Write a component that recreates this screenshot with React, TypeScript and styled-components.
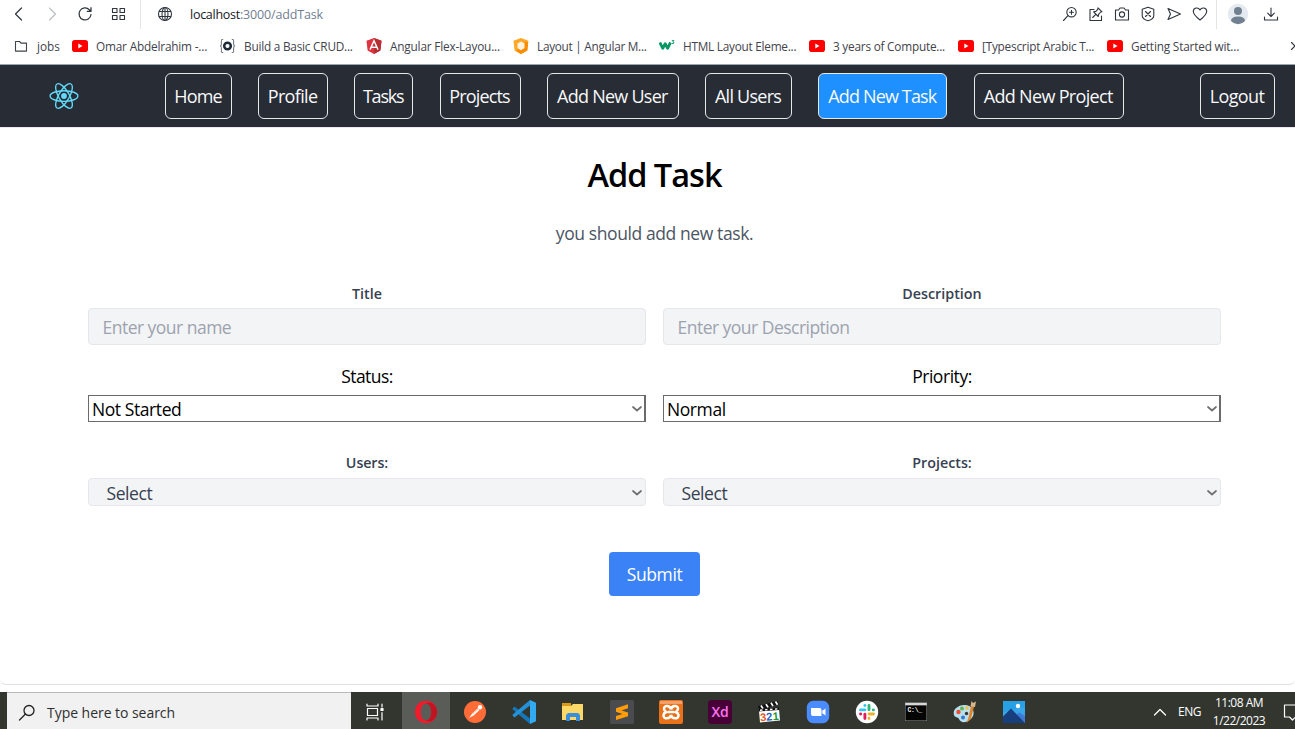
import React from 'react';
import styled, { createGlobalStyle } from 'styled-components';

const GlobalStyle = createGlobalStyle`
  * { box-sizing: border-box; }
  html, body { margin: 0; height: 729px; overflow: hidden; }
  body { background: #fff; font-family: "Open Sans", "Noto Sans", sans-serif; }
  svg { display: block; flex: none; }
`;

const Screen = styled.div`
  width: 1295px;
  height: 729px;
  display: flex;
  flex-direction: column;
  overflow: hidden;
  background: #fff;
`;

const Toolbar = styled.div`
  height: 29px;
  flex: none;
  display: flex;
  align-items: center;
  padding: 0 16px 0 11px;
`;

const ToolGroup = styled.div<{ $gap: number; $left?: number }>`
  display: flex;
  align-items: center;
  gap: ${(p) => p.$gap}px;
  margin-left: ${(p) => p.$left ?? 0}px;
  padding-bottom: 1px;
`;

const Divider = styled.div<{ $left: number }>`
  width: 1px;
  height: 29px;
  margin-left: ${(p) => p.$left}px;
  background: #e3e4e8;
`;

const Address = styled.div`
  flex: 1;
  margin-left: 17px;
  font-size: 12.5px;
  line-height: 18px;
  letter-spacing: -0.27px;
  color: #16181d;
  span { color: #708090; letter-spacing: -0.15px; }
`;

const Bookmarks = styled.div`
  height: 36px;
  flex: none;
  display: flex;
  align-items: center;
  padding: 0 0 1px 13px;
  border-bottom: 1px solid #9aa7b3;
`;

const Bookmark = styled.div<{ $width: number; $ls: number }>`
  width: ${(p) => p.$width}px;
  flex: none;
  display: flex;
  align-items: center;
  gap: 8px;
  font-size: 11.8px;
  line-height: 18px;
  letter-spacing: ${(p) => p.$ls}px;
  white-space: nowrap;
  color: #3f434b;
`;

const Nav = styled.nav`
  height: 62px;
  flex: none;
  display: flex;
  align-items: center;
  padding: 0 20px 0 49px;
  background: #282c34;
`;

const NavLinks = styled.div`
  flex: 1;
  display: flex;
  gap: 26.4px;
  margin-left: 86px;
`;

const NavButton = styled.button<{ $width: number; $ls: number; $active?: boolean }>`
  width: ${(p) => p.$width}px;
  height: 46px;
  flex: none;
  display: flex;
  align-items: center;
  justify-content: center;
  padding: 0 1px 1px 0;
  border: 1px solid #e6e8ea;
  border-radius: 6px;
  background: ${(p) => (p.$active ? '#1e90ff' : 'transparent')};
  color: #f8f9fa;
  font: 480 18px/26px "Open Sans", sans-serif;
  letter-spacing: ${(p) => p.$ls}px;
  white-space: nowrap;
`;

const Page = styled.main`
  height: 558px;
  flex: none;
  display: flex;
  flex-direction: column;
  align-items: center;
  padding-left: 14px;
  border-top: 1px solid #eceaf0;
  border-bottom: 1px solid #dfe0e8;
  border-radius: 0 0 6px 6px;
`;

const Heading = styled.h1`
  margin: 24px 0 0;
  font-size: 32.5px;
  font-weight: 570;
  line-height: 46px;
  letter-spacing: -1px;
  color: #000;
`;

const Lead = styled.p`
  margin: 22px 0 0;
  font-size: 17.5px;
  line-height: 26px;
  letter-spacing: -0.4px;
  color: #4b5563;
`;

const Form = styled.form`
  width: 1133px;
  margin-top: 36px;
  display: grid;
  grid-template-columns: 558px 558px;
  column-gap: 17px;
`;

const Field = styled.div<{ $height: number }>`
  height: ${(p) => p.$height}px;
  display: flex;
  flex-direction: column;
`;

const Label = styled.label<{ $plain?: boolean; $ls?: number; $line?: number }>`
  height: ${(p) => (p.$plain ? 35 : 26)}px;
  line-height: ${(p) => p.$line ?? (p.$plain ? 32 : 24)}px;
  text-align: center;
  font-size: ${(p) => (p.$plain ? 17.5 : 14.3)}px;
  font-weight: ${(p) => (p.$plain ? 400 : 570)};
  letter-spacing: ${(p) => p.$ls ?? 0}px;
  color: ${(p) => (p.$plain ? '#000' : '#374151')};
`;

const Input = styled.input`
  height: 37px;
  padding: 0 13.5px 0;
  border: 1px solid #e5e7eb;
  border-radius: 4px;
  background: #f3f4f6;
  font: 400 17.5px/24px "Open Sans", sans-serif;
  letter-spacing: -0.52px;
  &::placeholder { color: #9ca3af; opacity: 1; }
`;

const Select = styled.div<{ $soft?: boolean }>`
  height: ${(p) => (p.$soft ? 28 : 27)}px;
  display: flex;
  align-items: center;
  justify-content: space-between;
  padding: ${(p) => (p.$soft ? '2px 3px 0 17.5px' : '1px 2px 0 3px')};
  border: 1px solid ${(p) => (p.$soft ? '#e5e7eb' : '#6b6b6b')};
  border-right-width: ${(p) => (p.$soft ? 1 : 2)}px;
  border-radius: ${(p) => (p.$soft ? 4 : 0)}px;
  background: ${(p) => (p.$soft ? '#f3f4f6' : '#fff')};
  color: ${(p) => (p.$soft ? '#374151' : '#000')};
  font-size: 17.5px;
  line-height: 24px;
  letter-spacing: -0.42px;
  svg { margin-top: ${(p) => (p.$soft ? -1 : 0)}px; }
`;

const Submit = styled.button`
  width: 91px;
  height: 44px;
  margin-top: 46px;
  padding: 0 0 1px;
  border: 0;
  border-radius: 4px;
  background: #3b82f6;
  color: #fff;
  font: 400 17.5px/26px "Open Sans", sans-serif;
  letter-spacing: -0.4px;
`;

const Taskbar = styled.footer`
  height: 37px;
  margin-top: 7px;
  flex: none;
  display: flex;
  padding-left: 7px;
  background: #33362f;
  color: #fff;
`;

const Search = styled.div`
  width: 344px;
  flex: none;
  display: flex;
  align-items: center;
  gap: 11px;
  padding: 3px 0 0 11px;
  border-top: 1px solid #b9b9b9;
  background: #f1f1f1;
  color: #2f2f2f;
  font-size: 14px;
  letter-spacing: -0.04px;
`;

const Apps = styled.div`
  flex: 1;
  display: flex;
`;

const AppSlot = styled.div<{ $active?: boolean; $first?: boolean }>`
  width: ${(p) => (p.$first ? 51 : p.$active ? 48 : 49)}px;
  margin-right: ${(p) => (p.$active ? 0.5 : 0)}px;
  height: 37px;
  padding: 3px ${(p) => (p.$first ? 3 : 0)}px 0 0;
  display: flex;
  align-items: center;
  justify-content: center;
  background: ${(p) => (p.$active ? '#595c57' : 'transparent')};
`;

const Tray = styled.div`
  width: 142px;
  flex: none;
  display: flex;
  align-items: center;
  overflow: hidden;
  font-size: 12px;
  svg { margin-top: 3px; }
`;

const Lang = styled.span`
  width: 24px;
  flex: none;
  margin: 2px 0 0 11px;
  letter-spacing: -0.5px;
`;

const Clock = styled.div`
  width: 62px;
  flex: none;
  margin-left: 6px;
  text-align: center;
  line-height: 17.500px;
  padding-top: 2px;
  letter-spacing: -0.5px;
  white-space: nowrap;
`;

type LineProps = { w: number; h?: number; vb: string; color?: string; sw?: number; children: React.ReactNode };
const Line = ({ w, h = w, vb, color = '#2f353e', sw = 1.1, children }: LineProps) => (
  <svg width={w} height={h} viewBox={vb} fill="none" stroke={color} strokeWidth={sw} strokeLinejoin="round" strokeLinecap="round">
    {children}
  </svg>
);

const Chevron = () => (
  <Line w={10} h={8} vb="0 0 10 8" color="#707070" sw={1.7}><path d="M1 2 5 5.500 9 2" /></Line>
);

const YouTube = () => (
  <svg width="16" height="12" viewBox="0 0 16 12"><rect width="16" height="12" rx="2.8" fill="#f00" /><path d="M6.3 3.6 10.5 6l-4.2 2.4z" fill="#fff" /></svg>
);
const Folder = () => (
  <Line w={16} vb="0 0 16 16" color="#3f434b"><path d="M2.5 3.500h4l1.5 1.600h5.500v8h-11z" /></Line>
);
const Braces = () => (
  <svg width="17" height="16" viewBox="0 0 17 16" fill="none" stroke="#777c82" strokeWidth="1.1">
    <path d="M4.2 1.5H3Q2.4 1.5 2.4 3v3Q2.4 8 1 8q1.4 0 1.4 2v3q0 1.5.6 1.5h1.2M12.8 1.5H14q.6 0 .6 1.5v3q0 2 1.4 2-1.4 0-1.4 2v3q0 1.5-.6 1.5h-1.2" />
    <circle cx="8.5" cy="8" r="3.3" stroke="#1d2a37" strokeWidth="2.5" />
  </svg>
);
const Angular = () => (
  <svg width="16" height="16" viewBox="0 0 16 16">
    <path d="M8 0 15.5 2.7 14.4 12.4 8 16 1.6 12.4.5 2.7z" fill="#dd3340" />
    <path d="M8 0 15.5 2.7 14.4 12.4 8 16z" fill="#b52e31" />
    <path d="M4 11.6 8 2.8l4 8.800M5.700 9.200h4.600" fill="none" stroke="#fff" strokeWidth="1.4" />
  </svg>
);
const Material = () => (
  <svg width="16" height="16" viewBox="0 0 16 16">
    <path d="M8 0 15.4 2.7 14.3 12.4 8 16 1.6 12.4.5 2.7z" fill="#ffa726" />
    <path d="m8 16-5-2.800 9-9.500 3.200.8-.9 7.900z" fill="#fb8c00" />
    <path d="m8 3.400 4 2.300-1 1.200 1 .9-1 1.100 1 .9L8 12.200 4 9.800l1-.9-1-1.100 1-.9-1-1.200z" fill="#fff3df" />
  </svg>
);
const W3 = () => (
  <svg width="16" height="16" viewBox="0 0 16 16" fill="none" stroke="#059862">
    <path d="m.8 4.500 3 5.800 2.400-4.600 2.400 4.600 2.900-5.800" strokeWidth="2.800" strokeLinejoin="round" />
    <path d="M12.800 2.600h2.200l-1.200 1.300q1.500 0 1.200 1.200-.7 1-2.100.3" strokeWidth=".9" />
  </svg>
);

const ReactLogo = () => (
  <svg width="30" height="30" viewBox="-15 -15 30 30" fill="none" stroke="#61dafb" strokeWidth="1.35">
    <circle r="2.9" fill="#61dafb" stroke="none" />
    {[0, 60, 120].map((a) => <ellipse key={a} rx="13.9" ry="5.3" transform={`rotate(${a})`} />)}
  </svg>
);

const bookmarks = [
  { icon: <Folder />, label: 'jobs', width: 59, ls: -0.05 },
  { icon: <YouTube />, label: 'Omar Abdelrahim -...', width: 147, ls: -0.18 },
  { icon: <Braces />, label: 'Build a Basic CRUD...', width: 147, ls: -0.22 },
  { icon: <Angular />, label: 'Angular Flex-Layou...', width: 147, ls: -0.18 },
  { icon: <Material />, label: 'Layout | Angular M...', width: 146, ls: -0.28 },
  { icon: <W3 />, label: 'HTML Layout Eleme...', width: 150, ls: -0.25 },
  { icon: <YouTube />, label: '3 years of Compute...', width: 149, ls: -0.22 },
  { icon: <YouTube />, label: '[Typescript Arabic T...', width: 149, ls: -0.22 },
  { icon: <YouTube />, label: 'Getting Started wit...', width: 182, ls: -0.18 },
];

const links = [
  { label: 'Home', width: 67, ls: -0.9 },
  { label: 'Profile', width: 69.4, ls: -0.65 },
  { label: 'Tasks', width: 59, ls: -1.2 },
  { label: 'Projects', width: 81, ls: -0.85 },
  { label: 'Add New User', width: 131.8, ls: -0.75 },
  { label: 'All Users', width: 86.8, ls: -0.75 },
  { label: 'Add New Task', width: 129, ls: -0.83, active: true },
  { label: 'Add New Project', width: 150, ls: -0.67 },
];

const appIcons = [
  <Line w={18} vb="0 0 18 18" color="#fff" sw={1.2} key="tasks"><path d="M1 1v2h11V1M1 17v-2h11v2M1.5 5.5h10v7h-10zM16 1v3M16 9.500v7.500" /><path d="M15 5.500h2v2h-2z" fill="#fff" /></Line>,
  <svg key="opera" width="24" height="24" viewBox="0 0 24 24">
    <path fillRule="evenodd" d="M12 .8C5.500.8 1 5.600 1 12s4.500 11.200 11 11.200S23 18.400 23 12 18.500.8 12 .8m0 2.700c3.500 0 5.200 3.800 5.200 8.500s-1.700 8.500-5.200 8.500-5.200-3.800-5.200-8.500 1.700-8.500 5.200-8.500" fill="#f21b2d" />
    <path d="M12 3.500c2-1.700 5-1 7 .3C24.500 8 24.500 16 19 20.200c-2 1.400-5 2-7 .3 3.500 0 5.200-3.800 5.200-8.500S15.500 3.500 12 3.500" fill="#c01422" />
  </svg>,
  <svg key="postman" width="24" height="24" viewBox="0 0 24 24">
    <circle cx="12" cy="12" r="11" fill="#ff6c37" />
    <path d="m6 18 3.200-4.400 5.300-5.100 2 1.600-5.600 5.200z" fill="#fff" /><circle cx="17" cy="7.300" r="2.200" fill="#fff" /><path d="m9.500 14 5-4.500" stroke="#ff9a74" strokeWidth=".6" />
  </svg>,
  <svg key="vscode" width="24" height="24" viewBox="0 0 24 24">
    <path d="M.7 8.300 2.500 6.600l15.500 12V24L.7 9.500z" fill="#1677b8" />
    <path d="M.7 15.700 2.500 17.400 18 5.400V0L.7 14.500z" fill="#2491d6" />
    <path d="m18 0 6 2.800v18.400L18 24z" fill="#33a9f2" />
  </svg>,
  <svg key="files" width="24" height="24" viewBox="0 0 24 24">
    <path d="M1 3h9v4H1z" fill="#d99a18" /><path d="M1 6h9l2-2h10v16H1z" fill="#fbd867" />
    <path d="M5 21v-6l2-2h10l2 2v6h-4v-4H9v4z" fill="#3a8fdd" />
  </svg>,
  <svg key="sublime" width="24" height="24" viewBox="0 0 24 24">
    <rect width="24" height="24" rx="1.500" fill="#4a4b4e" />
    <path d="m6 8.300 12-4v4L11.500 10.400 18 12.500v3.700L6 20v-4l6.500-2.100L6 11.700z" fill="#ff9c0a" />
  </svg>,
  <svg key="xampp" width="24" height="24" viewBox="0 0 24 24">
    <rect width="24" height="24" rx="2" fill="#e8711a" /><path d="M1 1h22v3H1z" fill="#f0a068" />
    <path d="M12 9.500C11 5 5 5 5 8.700q0 2 2.400 3.300Q4.500 13 4.500 15.600c0 3.600 6.500 3.800 7.500-.6 1 4.400 7.500 4.200 7.500.6Q19.500 13 16.600 12 19 10.700 19 8.700C19 5 13 5 12 9.500M9 12h6" fill="none" stroke="#fff" strokeWidth="2.500" />
  </svg>,
  <svg key="xd" width="24" height="24" viewBox="0 0 24 24">
    <rect width="24" height="24" rx="4" fill="#470137" />
    <text x="12" y="16.800" textAnchor="middle" fontFamily="Open Sans" fontWeight="600" fontSize="14" letterSpacing="-.1" fill="#ff72f2">Xd</text>
  </svg>,
  <svg key="mpc" width="24" height="24" viewBox="0 0 24 24">
    <path d="m2 11 20-2 1 11.500-20 2z" fill="#fff" /><path d="M1 6 20.500.8l1 3.700L2 9.500z" fill="#111" />
    <path d="m4 5.500 2 3.200M9 4.100l2 3.200M14 2.800 16 6M18.500 1.500l2 3.200" stroke="#fff" strokeWidth="1.700" />
    <path d="m2 10.200 20-1.400" stroke="#111" strokeWidth="2.500" /><path d="m3 10.200 19-1.400" stroke="#fff" strokeWidth="1.400" strokeDasharray="2.500 2.500" />
    <g transform="rotate(-5 12 19)" fontFamily="Liberation Sans" fontWeight="700" fontSize="11">
      <text x="3.400" y="20.500" fill="#e2571b">3</text><text x="9.400" y="20.500" fill="#2464c6">2</text><text x="15.800" y="20.500" fill="#219536">1</text>
    </g>
  </svg>,
  <svg key="zoom" width="24" height="24" viewBox="0 0 24 24">
    <rect x=".8" y=".8" width="22.400" height="22.400" rx="6.500" fill="#4a8cff" />
    <path d="M5 8h8.500a2 2 0 0 1 2 2v6H7a2 2 0 0 1-2-2zM16.300 10.800 19.500 8.500v7l-3.200-2.300z" fill="#fff" />
  </svg>,
  <svg key="slack" width="24" height="24" viewBox="0 0 24 24" fill="none" strokeWidth="2.900" strokeLinecap="round">
    <circle cx="12" cy="12" r="11.200" fill="#fff" />
    <path d="M9.900 9.900H5.500M9.900 5.400v.2" stroke="#36c5f0" />
    <path d="M14 5.500v4.300M18.500 9.900h-.2" stroke="#2eb67d" /><path d="M14 14h4.500M14 18.500v-.2" stroke="#ecb22e" />
    <path d="M9.900 14.100v4.400M5.500 14h.2" stroke="#e01e5a" />
  </svg>,
  <svg key="cmd" width="24" height="24" viewBox="0 0 24 24">
    <path d="M1 2.500h22V21H1z" fill="#999" /><path d="M1.500 5.500h21v15h-21z" fill="#050505" /><path d="M1.500 3h21v2h-21z" fill="#d7d7d7" />
    <text x="3.500" y="12" fontFamily="Liberation Mono" fontWeight="700" fontSize="6.500" letterSpacing="-.3" fill="#eee">C:\_</text>
  </svg>,
  <svg key="paint" width="24" height="24" viewBox="0 0 24 24">
    <path d="M11 5C4 5.500-.5 10 1 15c1 3 4 1.500 5 4 1 3 4.500 4 8 2.500 5-2 8-7 6-11.500C18.500 6.500 15 4.800 11 5" fill="#b8def0" />
    <circle cx="5.500" cy="12" r="2.200" fill="#e84e32" /><circle cx="9" cy="8.500" r="2" fill="#61b84e" /><circle cx="14" cy="8" r="1.800" fill="#f4c43b" /><circle cx="10" cy="17.500" r="2" fill="#3478c6" /><circle cx="13.500" cy="13.500" r="1.700" fill="#33362f" />
    <path d="m13.500 23 2-5.500L18 6l3 .8-3 11.700z" fill="#df862b" /><path d="M17.500 6.500 18.500 1l1.500 2L23 1.500 22 7z" fill="#d9b58a" />
  </svg>,
  <svg key="photos" width="24" height="24" viewBox="0 0 24 24">
    <path d="M1 1h22v22H1z" fill="#3aa6ea" /><path d="M1 1h22v6L1 12z" fill="#27a0e6" /><path d="M23 16v7h-9l-1-7 4-3.500z" fill="#3e79d4" /><path d="m1 16.500 8-8L23 23H1z" fill="#173f7d" /><circle cx="16" cy="6" r="2.200" fill="#fff" />
  </svg>,
];

export default function App() {
  return (
    <Screen>
      <GlobalStyle />
      <Toolbar>
        <ToolGroup $gap={17}>
          <Line w={16} vb="0 0 16 16" sw={1.2}><path d="M10.500 2 4.500 8l6 6" /></Line>
          <Line w={16} vb="0 0 16 16" color="#b9bdc2"><path d="m5.500 2 6 6-6 6" /></Line>
          <Line w={16} vb="0 0 16 16" sw={1.25}><path d="M14 8.500A6 6 0 1 1 12.300 3.700L14 5.300M14 1.700v3.700h-3.700" /></Line>
          <Line w={16} vb="0 0 16 16"><path d="M2.500 2.500H7v4H2.500zM10 2.500h4.500v4H10zM2.500 9.500H7v4H2.500zM10 9.500h4.500v4H10z" /></Line>
        </ToolGroup>
        <Divider $left={14} />
        <ToolGroup $gap={0} $left={16}>
          <Line w={16} vb="0 0 16 16"><circle cx="8" cy="8" r="6.500" /><ellipse cx="8" cy="8" rx="3" ry="6.500" /><path d="M8 1.500v13M2.300 5.500h11.400M2.300 10.500h11.400" /></Line>
        </ToolGroup>
        <Address>localhost<span>:3000/addTask</span></Address>
        <ToolGroup $gap={10}>
          <Line w={16} vb="0 0 16 16"><circle cx="9.500" cy="6.200" r="4.700" /><path d="M9.500 4.200v4M7.500 6.200h4M6 9.700 1.500 14.500" /></Line>
          <Line w={16} vb="0 0 16 16"><path d="M6 3.500H2v11h11.500V10M10 1.800l4 4-1.300.2-2 2.200-.4 2.300L5.600 5.800l2.300-.4 2-2.200zM8 8.200l-3.300 3.300" /></Line>
          <Line w={16} vb="0 0 16 16"><path d="M1.500 4h3l1.500-2h4l1.500 2h3v10h-13z" /><circle cx="8" cy="8.500" r="2.600" /></Line>
          <Line w={16} vb="0 0 16 16"><path d="m8 1.200 5.800 2v6.300c0 2.700-3 4.500-5.800 5.300-2.800-.8-5.800-2.600-5.800-5.300V3.200zM5.500 5.500l5 5M10.500 5.500l-5 5" /></Line>
          <Line w={16} vb="0 0 16 16"><path d="M2 2.500 14.500 8 2 13.500 4.500 8z" /></Line>
          <Line w={16} vb="0 0 16 16"><path d="M8 14C3 10 1.300 8 1.300 5.500c0-4 5-4.700 6.700-1.500C9.700.8 14.700 1.500 14.700 5.500 14.700 8 13 10 8 14" /></Line>
        </ToolGroup>
        <Divider $left={8} />
        <ToolGroup $gap={14} $left={10}>
          <svg width="22" height="22" viewBox="0 0 22 22"><circle cx="11" cy="11" r="10.200" fill="#e5eaf0" /><circle cx="11" cy="8" r="4" fill="#708090" /><path d="M4 18q0-4.500 7-4.500t7 4.500q-3 3.200-7 3.200T4 18" fill="#708090" /></svg>
          <Line w={16} vb="0 0 16 16"><path d="M8 2v8.500M4.700 7.200 8 10.500l3.300-3.300M1.500 11v3h13v-3" /></Line>
        </ToolGroup>
      </Toolbar>
      <Bookmarks>
        {bookmarks.map((b) => <Bookmark key={b.label} $width={b.width} $ls={b.ls}>{b.icon}{b.label}</Bookmark>)}
        <Line w={8} h={10} vb="0 0 8 10"><path d="m2.500 1.500 3.500 3.500-3.500 3.500" /></Line>
      </Bookmarks>
      <Nav>
        <ReactLogo />
        <NavLinks>
          {links.map((l) => <NavButton key={l.label} $width={l.width} $ls={l.ls} $active={l.active}>{l.label}</NavButton>)}
        </NavLinks>
        <NavButton $width={75} $ls={-0.65}>Logout</NavButton>
      </Nav>
      <Page>
        <Heading>Add Task</Heading>
        <Lead>you should add new task.</Lead>
        <Form>
          <Field $height={78}><Label>Title</Label><Input placeholder="Enter your name" /></Field>
          <Field $height={78}><Label>Description</Label><Input placeholder="Enter your Description" /></Field>
          <Field $height={92}><Label $plain $ls={-0.6}>Status:</Label><Select>Not Started<Chevron /></Select></Field>
          <Field $height={92}><Label $plain $ls={-0.45}>Priority:</Label><Select>Normal<Chevron /></Select></Field>
          <Field $height={54}><Label $ls={-0.1} $line={22}>Users:</Label><Select $soft>Select<Chevron /></Select></Field>
          <Field $height={54}><Label $line={22}>Projects:</Label><Select $soft>Select<Chevron /></Select></Field>
        </Form>
        <Submit>Submit</Submit>
      </Page>
      <Taskbar>
        <Search>
          <Line w={18} vb="0 0 18 18" color="#222" sw={1.3}><circle cx="11" cy="6.500" r="5" /><path d="M7.500 10 1.500 16" /></Line>
          Type here to search
        </Search>
        <Apps>
          {appIcons.map((icon, i) => <AppSlot key={i} $first={i === 0} $active={i === 1}>{icon}</AppSlot>)}
        </Apps>
        <Tray>
          <Line w={14} h={10} vb="0 0 14 10" color="#fff" sw={1.3}><path d="m1.500 8 5.500-5.500L12.500 8" /></Line>
          <Lang>ENG</Lang>
          <Clock>11:08 AM<br />1/22/2023</Clock>
          <Line w={36} h={20} vb="0 0 36 20" color="#fff" sw={1.2}><path d="M14.500 3.500h16v12h-5l-3 3-3-3h-5z" transform="translate(0 -.5)" /></Line>
        </Tray>
      </Taskbar>
    </Screen>
  );
}
